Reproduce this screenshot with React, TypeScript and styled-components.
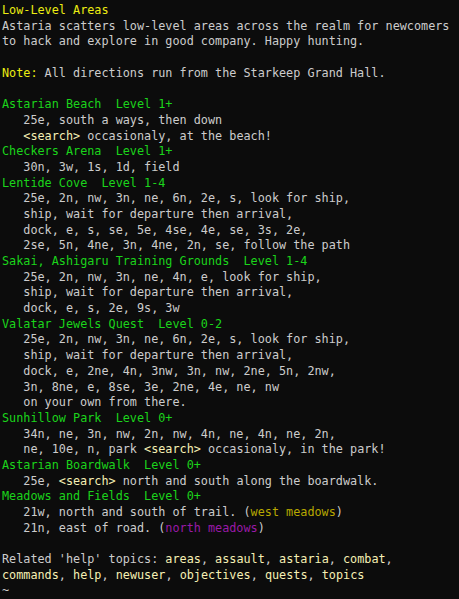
import React from "react";
import styled, { createGlobalStyle } from "styled-components";

const Global = createGlobalStyle`
  html, body { margin: 0; padding: 0; background: #0c0c0c; }
  body { overflow: hidden; }
`;

const Screen = styled.div`
  background: #0c0c0c;
  width: 459px;
  height: 599px;
  box-sizing: border-box;
  padding: 3px 0 0 2px;
  display: flex;
  flex-direction: column;
  font-family: "DejaVu Sans Mono", "Liberation Mono", monospace;
  font-size: 11.8px;
  line-height: 15.7px;
  color: #cccccc;
  white-space: pre;
`;

const Line = styled.div<{ $indent?: boolean }>`
  height: 15.7px;
  padding-left: ${(p) => (p.$indent ? "21.3px" : "0")};
`;

type Tone = "title" | "area" | "cream" | "olive" | "purple" | "plain";

const tones: Record<Tone, string> = {
  title: "#eded12",
  area: "#1bd41b",
  cream: "#f6f0b4",
  olive: "#b8a800",
  purple: "#9a1aa8",
  plain: "#cccccc",
};

const Seg = styled.span<{ $tone: Tone }>`
  color: ${(p) => tones[p.$tone]};
`;

type Segment = [Tone, string];
type L = { indent?: boolean; segs: Segment[] };

const t = (s: string): Segment => ["plain", s];

const lines: L[] = [
  { segs: [["title", "Low-Level Areas"]] },
  { segs: [t("Astaria scatters low-level areas across the realm for newcomers")] },
  { segs: [t("to hack and explore in good company. Happy hunting.")] },
  { segs: [] },
  { segs: [["title", "Note:"], t(" All directions run from the Starkeep Grand Hall.")] },
  { segs: [] },
  { segs: [["area", "Astarian Beach  Level 1+"]] },
  { indent: true, segs: [t("25e, south a ways, then down")] },
  { indent: true, segs: [["cream", "<search>"], t(" occasionaly, at the beach!")] },
  { segs: [["area", "Checkers Arena  Level 1+"]] },
  { indent: true, segs: [t("30n, 3w, 1s, 1d, field")] },
  { segs: [["area", "Lentide Cove  Level 1-4"]] },
  { indent: true, segs: [t("25e, 2n, nw, 3n, ne, 6n, 2e, s, look for ship,")] },
  { indent: true, segs: [t("ship, wait for departure then arrival,")] },
  { indent: true, segs: [t("dock, e, s, se, 5e, 4se, 4e, se, 3s, 2e,")] },
  { indent: true, segs: [t("2se, 5n, 4ne, 3n, 4ne, 2n, se, follow the path")] },
  { segs: [["area", "Sakai, Ashigaru Training Grounds  Level 1-4"]] },
  { indent: true, segs: [t("25e, 2n, nw, 3n, ne, 4n, e, look for ship,")] },
  { indent: true, segs: [t("ship, wait for departure then arrival,")] },
  { indent: true, segs: [t("dock, e, s, 2e, 9s, 3w")] },
  { segs: [["area", "Valatar Jewels Quest  Level 0-2"]] },
  { indent: true, segs: [t("25e, 2n, nw, 3n, ne, 6n, 2e, s, look for ship,")] },
  { indent: true, segs: [t("ship, wait for departure then arrival,")] },
  { indent: true, segs: [t("dock, e, 2ne, 4n, 3nw, 3n, nw, 2ne, 5n, 2nw,")] },
  { indent: true, segs: [t("3n, 8ne, e, 8se, 3e, 2ne, 4e, ne, nw")] },
  { indent: true, segs: [t("on your own from there.")] },
  { segs: [["area", "Sunhillow Park  Level 0+"]] },
  { indent: true, segs: [t("34n, ne, 3n, nw, 2n, nw, 4n, ne, 4n, ne, 2n,")] },
  { indent: true, segs: [t("ne, 10e, n, park "), ["cream", "<search>"], t(" occasionaly, in the park!")] },
  { segs: [["area", "Astarian Boardwalk  Level 0+"]] },
  { indent: true, segs: [t("25e, "), ["cream", "<search>"], t(" north and south along the boardwalk.")] },
  { segs: [["area", "Meadows and Fields  Level 0+"]] },
  { indent: true, segs: [t("21w, north and south of trail. ("), ["olive", "west meadows"], t(")")] },
  { indent: true, segs: [t("21n, east of road. ("), ["purple", "north meadows"], t(")")] },
  { segs: [] },
  {
    segs: [
      t("Related 'help' topics: "),
      ["cream", "areas"], t(", "),
      ["cream", "assault"], t(", "),
      ["cream", "astaria"], t(", "),
      ["cream", "combat"], t(","),
    ],
  },
  {
    segs: [
      ["cream", "commands"], t(", "),
      ["cream", "help"], t(", "),
      ["cream", "newuser"], t(", "),
      ["cream", "objectives"], t(", "),
      ["cream", "quests"], t(", "),
      ["cream", "topics"],
    ],
  },
  { segs: [t("~")] },
];

export default function App() {
  return (
    <>
      <Global />
      <Screen>
        {lines.map((l, i) => (
          <Line key={i} $indent={l.indent}>
            {l.segs.map(([tone, text], j) => (
              <Seg key={j} $tone={tone}>
                {text}
              </Seg>
            ))}
          </Line>
        ))}
      </Screen>
    </>
  );
}
